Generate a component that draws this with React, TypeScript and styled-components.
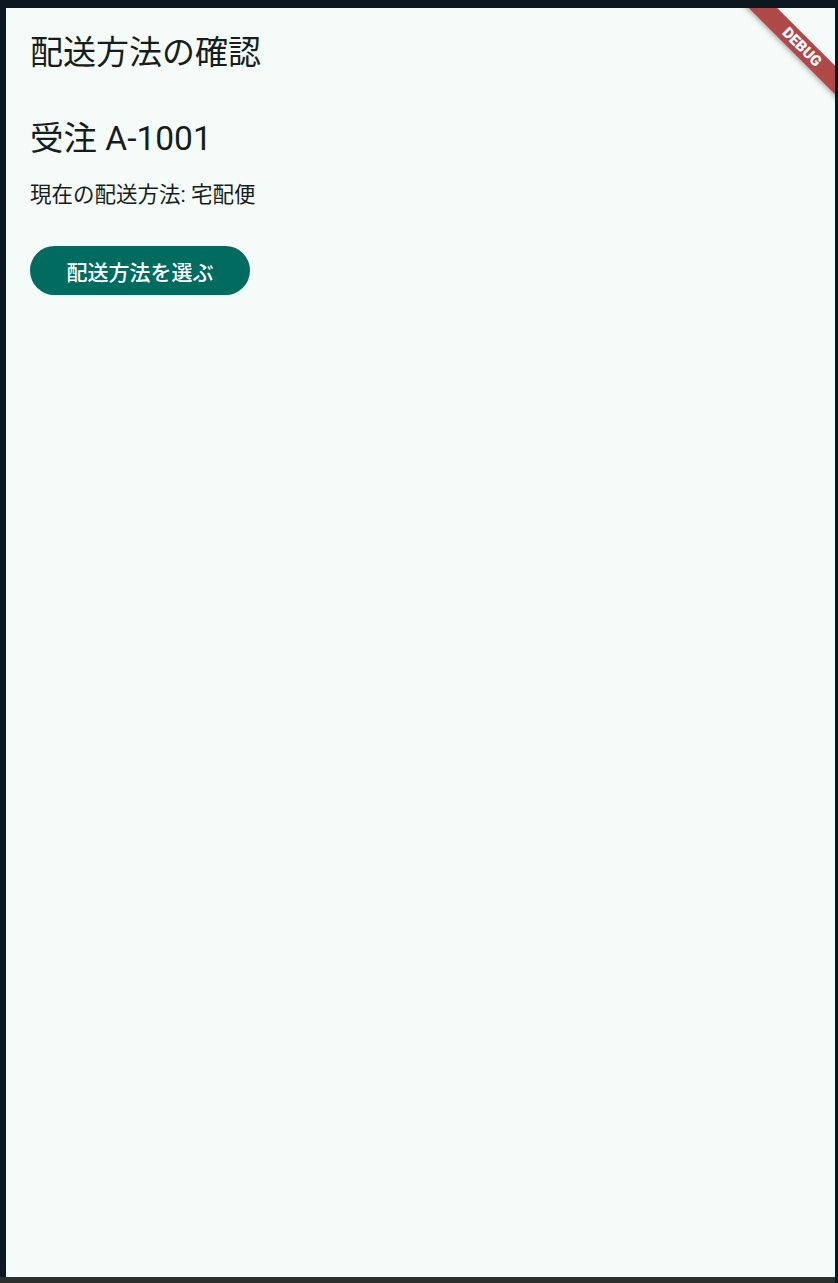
import styled, { createGlobalStyle } from "styled-components";

const GlobalStyle = createGlobalStyle`
  html, body {
    margin: 0;
    padding: 0;
    background-color: #0d1720;
  }
  * {
    box-sizing: border-box;
  }
`;

const Frame = styled.div`
  width: 838px;
  height: 1283px;
  display: flex;
  flex-direction: column;
  padding: 8px 3px 0 6px;
  background-color: #0d1720;
`;

const Screen = styled.div`
  position: relative;
  flex: 1;
  display: flex;
  flex-direction: column;
  background-color: #f4fbf8;
  overflow: hidden;
  font-family: Roboto, "Noto Sans CJK JP", sans-serif;
  color: #171d1b;
`;

const BottomBar = styled.div`
  height: 6px;
  margin: 0 -3px 0 -6px;
  width: 835px;
  background-color: #2a302e;
`;

const AppBar = styled.header`
  height: 84px;
  display: flex;
  align-items: center;
  padding: 0 24px;
  font-size: 33px;
  font-weight: 400;
`;

const Body = styled.main`
  display: flex;
  flex-direction: column;
  align-items: flex-start;
  padding: 24px;
`;

const Headline = styled.h2`
  margin: 0;
  font-size: 33.5px;
  font-weight: 400;
  line-height: 46px;
`;

const Detail = styled.p`
  margin: 18px 0 0;
  font-size: 21.5px;
  line-height: 30px;
`;

const PillButton = styled.button`
  margin-top: 36px;
  width: 220px;
  height: 49px;
  border: none;
  border-radius: 25px;
  background-color: #006b5f;
  color: #ffffff;
  font-family: Roboto, "Noto Sans CJK JP", sans-serif;
  font-size: 21px;
  font-weight: 500;
  cursor: pointer;
`;

const BannerCorner = styled.div`
  position: absolute;
  top: 0;
  right: 0;
  width: 110px;
  height: 110px;
  overflow: hidden;
  pointer-events: none;
`;

const Ribbon = styled.div`
  position: absolute;
  left: 2px;
  top: 29px;
  width: 150px;
  height: 20px;
  transform: rotate(45deg);
  background-color: #b04848;
  box-shadow: 0 2px 5px rgba(0, 0, 0, 0.3);
  color: #ffffff;
  font-family: Roboto, "DejaVu Sans", sans-serif;
  font-size: 15px;
  font-weight: 900;
  line-height: 20px;
  text-align: center;
`;

const App = () => {
  return (
    <>
      <GlobalStyle />
      <Frame>
        <Screen>
          <AppBar>配送方法の確認</AppBar>
          <Body>
            <Headline>受注 A-1001</Headline>
            <Detail>現在の配送方法: 宅配便</Detail>
            <PillButton>配送方法を選ぶ</PillButton>
          </Body>
          <BannerCorner>
            <Ribbon>DEBUG</Ribbon>
          </BannerCorner>
        </Screen>
        <BottomBar />
      </Frame>
    </>
  );
};

export default App;
